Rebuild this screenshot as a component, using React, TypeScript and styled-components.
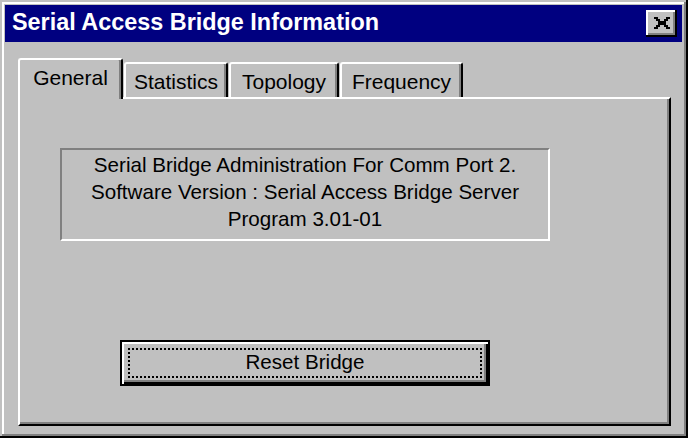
import React from "react";
import styled, { createGlobalStyle } from "styled-components";

const Global = createGlobalStyle`
  html, body { margin: 0; padding: 0; background: #c0c0c0; }
  body { font-family: "Liberation Sans", Arial, sans-serif; }
`;

const Window = styled.div`
  box-sizing: border-box;
  width: 688px;
  height: 438px;
  background: #c0c0c0;
  padding: 5px 6px 4px 5px;
  display: flex;
  flex-direction: column;
  box-shadow: inset -2px -2px 0 #000, inset 2px 2px 0 #c0c0c0,
    inset -4px -4px 0 #808080, inset 4px 4px 0 #fff;
`;

const TitleBar = styled.div`
  height: 37px;
  flex: none;
  background: #000080;
  display: flex;
  align-items: flex-start;
  justify-content: space-between;
  padding: 0 5px 0 7px;
`;

const TitleText = styled.div`
  color: #fff;
  font-weight: 700;
  font-size: 23.4px;
  line-height: 34px;
  white-space: nowrap;
`;

const CloseButton = styled.div`
  box-sizing: border-box;
  width: 31px;
  height: 27px;
  margin-top: 5px;
  background: #c0c0c0;
  display: flex;
  align-items: center;
  justify-content: center;
  padding: 0 0 1px 1px;
  box-shadow: inset -2px -2px 0 #000, inset 2px 2px 0 #fff,
    inset -4px -4px 0 #808080;
`;

const Body = styled.div`
  flex: 1;
  display: flex;
  flex-direction: column;
  padding: 16px 11px 8px 13px;
  min-height: 0;
`;

const TabRow = styled.div`
  height: 39px;
  flex: none;
  display: flex;
  align-items: flex-end;
  gap: 1px;
`;

const Tab = styled.div<{ $active?: boolean; $w: number }>`
  box-sizing: border-box;
  width: ${(p) => p.$w}px;
  height: ${(p) => (p.$active ? 41 : 35)}px;
  margin-bottom: ${(p) => (p.$active ? -2 : 0)}px;
  position: relative;
  z-index: ${(p) => (p.$active ? 2 : 0)};
  background: #c0c0c0;
  border-top: 2px solid #fff;
  border-left: 2px solid #fff;
  border-right: 2px solid #000;
  border-radius: 3px 3px 0 0;
  box-shadow: inset -2px 0 0 #808080;
  display: flex;
  justify-content: center;
  align-items: flex-start;
  padding-top: 6px;
  font-size: 21px;
  line-height: 24px;
  color: #000;
  white-space: nowrap;
`;

const Panel = styled.div`
  flex: 1;
  box-sizing: border-box;
  border: 2px solid;
  border-color: #fff #000 #000 #fff;
  box-shadow: inset -2px -2px 0 #808080;
  display: flex;
  flex-direction: column;
  align-items: flex-start;
`;

const InfoBox = styled.div`
  box-sizing: border-box;
  width: 490px;
  height: 93px;
  margin: 49px 0 0 40px;
  padding-top: 1px;
  border: 2px solid;
  border-color: #808080 #fff #fff #808080;
  font-size: 20.6px;
  line-height: 27px;
  text-align: center;
  color: #000;
`;

const InfoLine = styled.div`
  white-space: nowrap;
`;

const ResetButton = styled.button`
  position: relative;
  box-sizing: border-box;
  width: 370px;
  height: 46px;
  margin: 99px 0 0 100px;
  padding: 0 0 2px 0;
  border: 2px solid #000;
  background: #c0c0c0;
  box-shadow: inset 2px 2px 0 #fff, inset -2px -2px 0 #000,
    inset -4px -4px 0 #808080;
  font-family: "Liberation Sans", Arial, sans-serif;
  font-size: 20.6px;
  color: #000;
  cursor: default;

  &::after {
    content: "";
    position: absolute;
    inset: 6px;
    border: 2px dotted #000;
  }
`;

const CloseGlyph = () => (
  <svg width="16" height="12" viewBox="0 0 16 12" shapeRendering="crispEdges">
    <path
      fill="#000"
      d="M0 0h4v2H0z M12 0h4v2h-4z M2 2h4v2H2z M10 2h4v2h-4z M4 4h8v4H4z M2 8h4v2H2z M10 8h4v2h-4z M0 10h4v2H0z M12 10h4v2h-4z"
    />
  </svg>
);

const tabs = [
  { label: "General", w: 105 },
  { label: "Statistics", w: 104 },
  { label: "Topology", w: 110 },
  { label: "Frequency", w: 123 },
];

export default function App() {
  return (
    <>
      <Global />
      <Window>
        <TitleBar>
          <TitleText>Serial Access Bridge Information</TitleText>
          <CloseButton>
            <CloseGlyph />
          </CloseButton>
        </TitleBar>
        <Body>
          <TabRow>
            {tabs.map((t, i) => (
              <Tab key={t.label} $w={t.w} $active={i === 0}>
                {t.label}
              </Tab>
            ))}
          </TabRow>
          <Panel>
            <InfoBox>
              <InfoLine>Serial Bridge Administration For Comm Port 2.</InfoLine>
              <InfoLine>Software Version : Serial Access Bridge Server</InfoLine>
              <InfoLine>Program 3.01-01</InfoLine>
            </InfoBox>
            <ResetButton>Reset Bridge</ResetButton>
          </Panel>
        </Body>
      </Window>
    </>
  );
}
